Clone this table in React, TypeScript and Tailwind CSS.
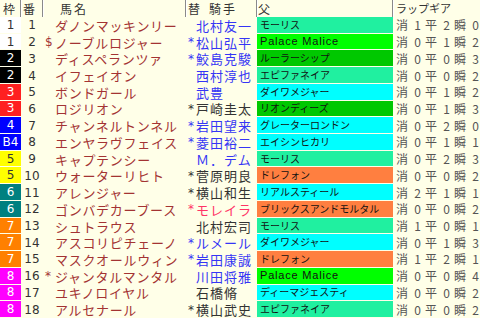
// Race entry table: frame, number, horse, jockey, sire and lap-gear columns.
type Row = {
  waku: string;
  ban: number;
  mark: string;
  name: string;
  jm: string;
  jockey: string;
  jc: "blue" | "dark" | "red";
  sire: string;
  sc: "mint" | "lime" | "green" | "cyan" | "orange";
  lap: [number, number, number];
};

const rows: Row[] = [
  { waku: "1", ban: 1, mark: "", name: "ダノンマッキンリー", jm: "", jockey: "北村友一", jc: "blue", sire: "モーリス", sc: "mint", lap: [1, 2, 0] },
  { waku: "1", ban: 2, mark: "$", name: "ノーブルロジャー", jm: "*", jockey: "松山弘平", jc: "blue", sire: "Palace Malice", sc: "lime", lap: [0, 1, 2] },
  { waku: "2", ban: 3, mark: "", name: "ディスペランツァ", jm: "*", jockey: "鮫島克駿", jc: "blue", sire: "ルーラーシップ", sc: "green", lap: [0, 0, 3] },
  { waku: "2", ban: 4, mark: "", name: "イフェイオン", jm: "", jockey: "西村淳也", jc: "blue", sire: "エピファネイア", sc: "mint", lap: [0, 0, 2] },
  { waku: "3", ban: 5, mark: "", name: "ボンドガール", jm: "", jockey: "武豊", jc: "blue", sire: "ダイワメジャー", sc: "cyan", lap: [0, 1, 2] },
  { waku: "3", ban: 6, mark: "", name: "ロジリオン", jm: "*", jockey: "戸崎圭太", jc: "dark", sire: "リオンディーズ", sc: "green", lap: [0, 1, 3] },
  { waku: "4", ban: 7, mark: "", name: "チャンネルトンネル", jm: "*", jockey: "岩田望来", jc: "blue", sire: "グレーターロンドン", sc: "cyan", lap: [0, 2, 0] },
  { waku: "B4", ban: 8, mark: "", name: "エンヤラヴフェイス", jm: "*", jockey: "菱田裕二", jc: "blue", sire: "エイシンヒカリ", sc: "cyan", lap: [0, 1, 1] },
  { waku: "5", ban: 9, mark: "", name: "キャプテンシー", jm: "", jockey: "Ｍ．デム", jc: "blue", sire: "モーリス", sc: "mint", lap: [0, 2, 3] },
  { waku: "5", ban: 10, mark: "", name: "ウォーターリヒト", jm: "*", jockey: "菅原明良", jc: "dark", sire: "ドレフォン", sc: "orange", lap: [0, 0, 2] },
  { waku: "6", ban: 11, mark: "", name: "アレンジャー", jm: "*", jockey: "横山和生", jc: "dark", sire: "リアルスティール", sc: "cyan", lap: [2, 1, 1] },
  { waku: "6", ban: 12, mark: "", name: "ゴンバデカーブース", jm: "*", jockey: "モレイラ", jc: "red", sire: "ブリックスアンドモルタル", sc: "orange", lap: [0, 0, 2] },
  { waku: "7", ban: 13, mark: "", name: "シュトラウス", jm: "", jockey: "北村宏司", jc: "dark", sire: "モーリス", sc: "mint", lap: [1, 0, 1] },
  { waku: "7", ban: 14, mark: "", name: "アスコリピチェーノ", jm: "*", jockey: "ルメール", jc: "blue", sire: "ダイワメジャー", sc: "cyan", lap: [0, 1, 3] },
  { waku: "7", ban: 15, mark: "", name: "マスクオールウィン", jm: "*", jockey: "岩田康誠", jc: "blue", sire: "ドレフォン", sc: "orange", lap: [1, 2, 1] },
  { waku: "8", ban: 16, mark: "*", name: "ジャンタルマンタル", jm: "", jockey: "川田将雅", jc: "blue", sire: "Palace Malice", sc: "lime", lap: [0, 0, 4] },
  { waku: "8", ban: 17, mark: "", name: "ユキノロイヤル", jm: "", jockey: "石橋脩", jc: "dark", sire: "ディーマジェスティ", sc: "cyan", lap: [0, 0, 2] },
  { waku: "8", ban: 18, mark: "", name: "アルセナール", jm: "*", jockey: "横山武史", jc: "dark", sire: "エピファネイア", sc: "mint", lap: [0, 0, 2] },
];

const wakuColor: Record<string, string> = {
  "1": "bg-white text-[#333]",
  "2": "bg-black text-white",
  "3": "bg-[#ff2020] text-white",
  "4": "bg-[#0000ff] text-white",
  B4: "bg-[#0000ff] text-white",
  "5": "bg-[#ffff00] text-[#333]",
  "6": "bg-[#008080] text-white",
  "7": "bg-[#ff8000] text-white",
  "8": "bg-[#ff00ff] text-white",
};

const jockeyColor = {
  blue: "text-[#3535f5]",
  dark: "text-[#333]",
  red: "text-[#ff3366]",
};

const sireColor = {
  mint: "bg-[#20f0a0]",
  lime: "bg-[#00ff00]",
  green: "bg-[#00c800]",
  cyan: "bg-[#00ffff]",
  orange: "bg-[#ff7f40]",
};

const cols = "grid grid-cols-[21px_22px_143px_71px_136px_87px]";
const jp = "[font-family:'Noto_Sans_CJK_JP','Noto_Sans',sans-serif]";

function HeadCell({ children, className = "" }: { children?: React.ReactNode; className?: string }) {
  return (
    <div className={`flex items-center border-r border-[#8a8a8a] shadow-[1px_0_0_#fff] ${className}`}>
      {children}
    </div>
  );
}

export default function App() {
  return (
    <div className={`w-[480px] h-[318px] bg-[#ffffe8] flex flex-col overflow-hidden text-[13px] leading-none ${jp}`}>
      <div className={`${cols} h-[17px] text-[#333] text-[12px]`}>
        <HeadCell className="pl-[3px]">枠</HeadCell>
        <HeadCell className="pl-[2px]">番</HeadCell>
        <HeadCell className="pl-[17px] tracking-[2px]">馬名</HeadCell>
        <HeadCell className="pl-[2px] gap-[9px]">
          <span>替</span>
          <span className="tracking-[2px]">騎手</span>
        </HeadCell>
        <HeadCell className="pl-[1px]">父</HeadCell>
        <div className="flex items-center pl-[3px] text-[11px]">ラップギア</div>
      </div>

      <div className="flex-1 grid grid-rows-[repeat(18,1fr)]">
        {rows.map((r) => (
          <div key={r.ban} className={cols}>
            <div
              className={`flex items-center justify-center border-b border-[#ffffe8] text-[12px] [font-family:'DejaVu_Sans',sans-serif] ${wakuColor[r.waku]}`}
            >
              {r.waku}
            </div>
            <div className="flex items-center justify-center text-[#333] text-[12px] [font-family:'DejaVu_Sans',sans-serif]">
              {r.ban}
            </div>
            <div className="flex items-center pl-[2px] text-[#a33333] tracking-[0.7px] whitespace-nowrap overflow-hidden">
              <span className="w-[10px] shrink-0 [font-family:'DejaVu_Sans',sans-serif] text-[12px]">{r.mark}</span>
              <span>{r.name}</span>
            </div>
            <div className={`flex items-center pl-[2px] tracking-[1px] whitespace-nowrap overflow-hidden ${jockeyColor[r.jc]}`}>
              <span className="w-[8px] shrink-0 [font-family:'DejaVu_Sans',sans-serif] text-[12px]">{r.jm}</span>
              <span>{r.jockey}</span>
            </div>
            <div
              className={`flex items-center pl-[3px] border-b border-[#ffffe8] text-[#111] whitespace-nowrap overflow-hidden ${sireColor[r.sc]} ${
                /^[A-Za-z]/.test(r.sire) ? "text-[11px] tracking-[0.8px] [font-family:'Liberation_Sans',sans-serif]" : "text-[10px]"
              }`}
            >
              {r.sire}
            </div>
            <div className="flex items-center pl-[3px] text-[#555] text-[12px]">
              {(["消", "平", "瞬"] as const).map((k, i) => (
                <span key={k} className="flex">
                  <span className="w-[14px]">{k}</span>
                  <span className="w-[15px] text-center">{r.lap[i]}</span>
                </span>
              ))}
            </div>
          </div>
        ))}
      </div>
    </div>
  );
}
